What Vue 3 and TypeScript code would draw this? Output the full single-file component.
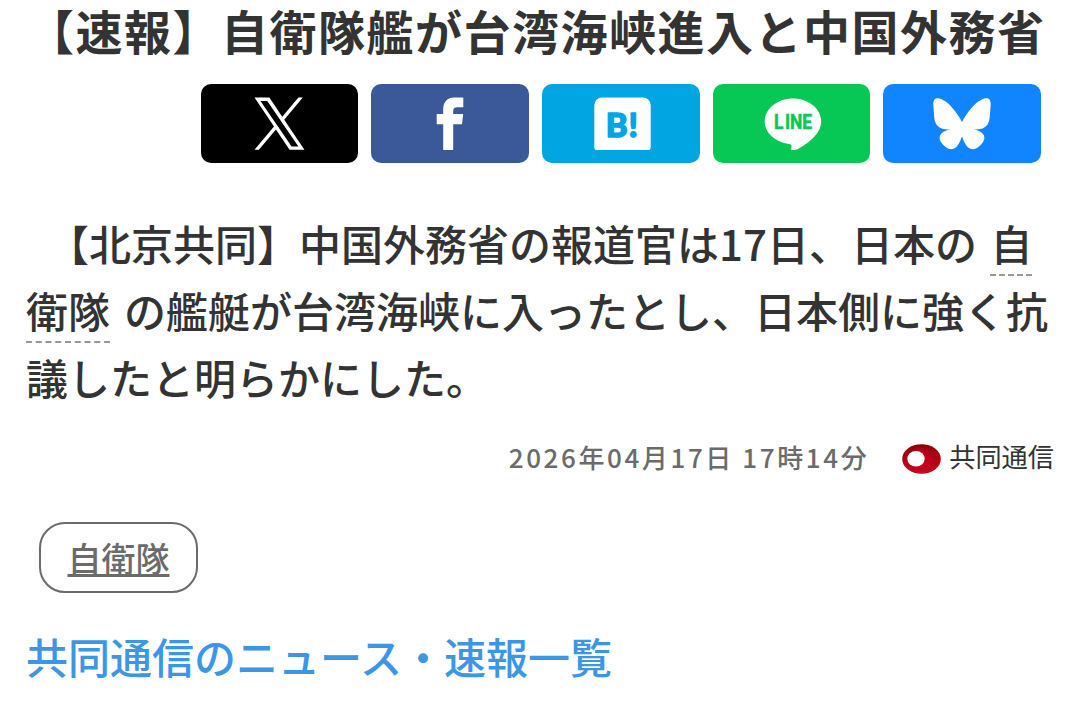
<template>
  <main class="article">
    <h1 class="title">{{ title }}</h1>
    <ul class="share">
      <li v-for="item in shares" :key="item.name">
        <a href="#" class="share-btn" :class="item.name" :aria-label="item.label">
          <svg v-if="item.name === 'x'" class="icon" viewBox="0 0 60 54">
            <path transform="translate(5.5 0.5) scale(0.0416 0.0427)" d="M714.163 519.284L1160.89 0H1055.03L667.137 450.887L357.328 0H0L468.492 681.821L0 1226.37H105.866L515.491 750.218L842.672 1226.37H1200L714.137 519.284H714.163ZM569.165 687.828L521.697 619.934L144.011 79.6944H306.615L611.412 515.685L658.88 583.579L1055.08 1150.3H892.476L569.165 687.854V687.828Z" />
          </svg>
          <svg v-else-if="item.name === 'facebook'" class="icon" viewBox="0 0 60 54">
            <path d="M23.2 53V27.3h-6.5V17h6.5v-4.5C23.2 5 27 .5 34.5.5h8.8v9.8h-5.4c-3.5 0-4.7 1.1-4.7 4.2V17h10l-1.2 10.3h-8.8V53z" />
          </svg>
          <svg v-else-if="item.name === 'hatena'" class="icon" viewBox="0 0 60 54">
            <path d="M11 .5h41a7.7 7.7 0 0 1 7.7 7.7v42q0 1.800-1.200 2.800H4.500q-1.200-1-1.200-2.800v-42A7.700 7.700 0 0 1 11 .5z" />
            <text class="hatena-text" x="14.8 37.6" y="40">B!</text>
          </svg>
          <svg v-else-if="item.name === 'line'" class="icon" viewBox="0 0 60 54">
            <path d="M32 1.500c15.500 0 28.200 10.200 28.200 23 0 5.500-2.500 10.500-7 15.300C48.500 45 41 50 36.500 52.300c-1.500.7-3.500.9-6.200.7l.2-3.700c0-1.400-.7-2.100-2.500-2.300C14.500 45 3.700 36 3.700 24.500 3.700 11.700 16.500 1.500 32 1.500z" />
            <text class="line-text" transform="scale(.88 1)" x="14.8 27.2 33 47" y="32">LINE</text>
          </svg>
          <svg v-else class="icon" viewBox="0 0 60 54">
            <path transform="translate(.3 .2) scale(.099 .1)" d="M135.720 44.030C202.216 93.951 273.740 195.170 300 249.490c26.262-54.316 97.782-155.540 164.280-205.460C512.260 8.009 590-19.862 590 68.825c0 17.712-10.155 148.790-16.111 170.070-20.703 73.984-96.144 92.854-163.250 81.433 117.300 19.964 147.140 86.092 82.697 152.220-122.390 125.590-175.910-31.511-189.630-71.766-2.514-7.380-3.690-10.832-3.708-7.896-.017-2.936-1.193.516-3.707 7.896-13.714 40.255-67.233 197.360-189.630 71.766-64.444-66.128-34.605-132.260 82.697-152.220-67.108 11.421-142.550-7.449-163.250-81.433C20.155 217.613 10 86.535 10 68.825c0-88.687 77.742-60.816 125.720-24.795z" />
          </svg>
        </a>
      </li>
    </ul>
    <p class="body">　【北京共同】中国外務省の報道官は17日、日本の<a href="#" class="keyword">自衛隊</a>の艦艇が台湾海峡に入ったとし、日本側に強く抗議したと明らかにした。</p>
    <div class="meta">
      <time>{{ date }}</time>
      <span class="source">
        <svg class="source-logo" viewBox="0 0 39 30">
          <defs>
            <linearGradient id="ring" x1="0" y1="0" x2="0" y2="1">
              <stop offset="0" stop-color="#8c0209" />
              <stop offset="0.5" stop-color="#b00416" />
              <stop offset="1" stop-color="#c40a20" />
            </linearGradient>
            <linearGradient id="inner" x1="0" y1="1" x2="1" y2="0">
              <stop offset="0.4" stop-color="#c8001f" />
              <stop offset="1" stop-color="#a00210" />
            </linearGradient>
          </defs>
          <ellipse cx="19.5" cy="15" rx="19.3" ry="14.8" fill="url(#ring)" />
          <ellipse cx="20" cy="15" rx="12.5" ry="11" fill="url(#inner)" />
          <ellipse cx="14" cy="14.700" rx="8.700" ry="7.700" fill="#fff" />
        </svg>
        <span>共同通信</span>
      </span>
    </div>
    <div class="tags">
      <a v-for="tag in tags" :key="tag" href="#" class="tag">{{ tag }}</a>
    </div>
    <a href="#" class="more">共同通信のニュース・速報一覧</a>
  </main>
</template>

<script setup lang="ts">
import { ref } from 'vue'

interface Share {
  name: string
  label: string
}

const title = ref('【速報】自衛隊艦が台湾海峡進入と中国外務省')
const date = ref('2026年04月17日 17時14分')
const tags = ref<string[]>(['自衛隊'])

const shares = ref<Share[]>([
  { name: 'x', label: 'X' },
  { name: 'facebook', label: 'Facebook' },
  { name: 'hatena', label: 'はてなブックマーク' },
  { name: 'line', label: 'LINE' },
  { name: 'bluesky', label: 'Bluesky' },
])
</script>

<style>
body {
  margin: 0;
  background: #fff;
}
</style>

<style scoped>
.article {
  box-sizing: border-box;
  width: 1080px;
  height: 713px;
  overflow: hidden;
  padding: 0 26px;
  color: #333;
  font-family: "Noto Sans CJK JP", sans-serif;
  font-weight: 500;
}
.title {
  margin: 0;
  padding-left: 1px;
  height: 84px;
  font-size: 47px;
  font-weight: 700;
  line-height: 59px;
  letter-spacing: 1.5px;
  white-space: nowrap;
}

/* share buttons */
.share {
  display: grid;
  grid-template-columns: repeat(5, 1fr);
  gap: 13.1px;
  width: 840.2px;
  margin: 0 -15px 0 174.7px;
  padding: 0;
  list-style: none;
}
.share-btn {
  display: flex;
  align-items: center;
  justify-content: center;
  height: 79px;
  border-radius: 10px;
}
.icon {
  display: block;
  width: 60px;
  height: 54px;
  overflow: visible;
  fill: #fff;
}
.x {
  background: #000;
}
.facebook {
  background: #3b5998;
}
.hatena {
  background: #00a5e1;
}
.line {
  background: #07c755;
}
.bluesky {
  background: #1185fe;
}
.hatena-text {
  fill: #00a5e1;
  stroke: #00a5e1;
  stroke-width: 1.4;
  stroke-linejoin: round;
  font-family: Lato, sans-serif;
  font-size: 33px;
  font-weight: 900;
}
.line-text {
  fill: #07c755;
  stroke: #07c755;
  stroke-width: 0.5;
  stroke-linejoin: round;
  font-family: Roboto, sans-serif;
  font-size: 19.8px;
  font-weight: 700;
}

.body {
  margin: 46px -10px 0 0;
  font-size: 42px;
  line-height: 67px;
}
.keyword {
  margin: 0 14px 0 13.5px;
  padding-bottom: 1px;
  border-bottom: 2px dashed #999990;
  color: inherit;
  text-decoration: none;
}

.meta {
  display: flex;
  align-items: center;
  justify-content: flex-end;
  height: 40px;
  margin-top: 26px;
  font-size: 26px;
}
time {
  color: #6b6b6b;
  letter-spacing: 2.6px;
}
.source {
  display: flex;
  align-items: center;
  gap: 8px;
  margin-left: 33px;
  font-size: 26.2px;
  font-weight: 400;
}
.source-logo {
  width: 39px;
  height: 30px;
  margin-top: 5px;
}

.tags {
  display: flex;
  margin: 46px 0 0 13px;
}
.tag {
  box-sizing: border-box;
  width: 159px;
  height: 71px;
  border: 2px solid #6b6b6b;
  border-radius: 26px;
  color: #6b6b6b;
  font-size: 34px;
  line-height: 67px;
  text-align: center;
}
.more {
  display: block;
  margin-top: 30px;
  color: #3c96e6;
  font-size: 42px;
  line-height: 66px;
  text-decoration: none;
}
</style>
